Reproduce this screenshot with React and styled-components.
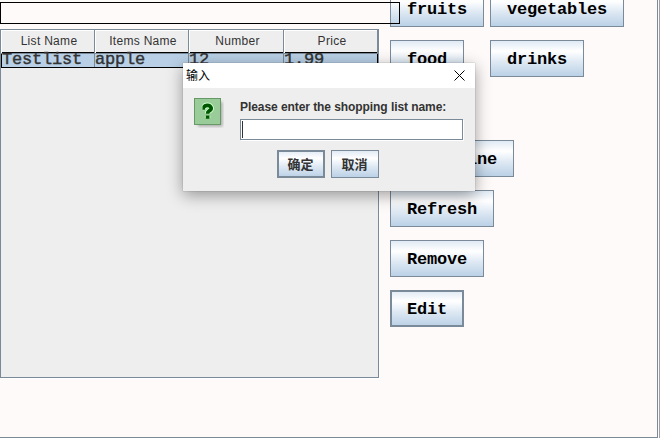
import React from "react";
import styled, { createGlobalStyle } from "styled-components";

const steel = "#7a8a99";
const ocean =
  "linear-gradient(to bottom, #dde8f3 0%, #ffffff 30%, #dde8f3 60%, #b8cfe5 100%)";

const GlobalStyle = createGlobalStyle`
  * { box-sizing: border-box; }
  body { margin: 0; overflow: hidden; background: #fffafa; }
`;

const Window = styled.main`
  position: relative;
  display: flex;
  width: 660px;
  height: 438px;
  overflow: hidden;
  border-right: 1px solid #a0a0a3;
  background: #fffafa;
`;

const Pane = styled.div`
  display: flex;
  width: 658px;
  flex: none;
  height: 438px;
  border-right: 1px solid ${steel};
  border-bottom: 1px solid ${steel};
`;

const ListSide = styled.section`
  width: 390px;
  flex: none;
  padding-top: 2px;
  position: relative;
  z-index: 1;
`;

const SearchField = styled.div`
  width: 400px;
  height: 22px;
  border: 1px solid #000;
`;

const ScrollPane = styled.div`
  width: 379px;
  height: 349px;
  margin-top: 5px;
  border: 1px solid ${steel};
  background: #eeeeee;
  box-shadow: 1px 1px 0 #fff;
`;

const HeaderRow = styled.div`
  display: grid;
  grid-template-columns: 94px 94px 95px 94px;
  height: 22px;
`;

const HeaderCell = styled.div`
  border-right: 1px solid ${steel};
  border-bottom: 1px solid ${steel};
  box-shadow: inset 1px 1px 0 #fff;
  font: 12px/23px "Liberation Sans", Arial, sans-serif;
  letter-spacing: 0.3px;
  padding-left: 3px;
  text-align: center;
  color: #333;
`;

const SelectedRow = styled.div`
  display: grid;
  grid-template-columns: 93px 94px 95px 93px;
  height: 16px;
  border: 1px solid #000;
  background: #b8cfe5;
`;

const Cell = styled.div`
  border-right: 1px solid ${steel};
  font: 17px/14px "Liberation Mono", "Courier New", monospace;
  letter-spacing: -0.2px;
  -webkit-text-stroke: 0.4px #333;
  color: #333;
  white-space: pre;
  &:last-child { border-right: 0; }
`;

const Actions = styled.section`
  display: flex;
  flex-direction: column;
  gap: 13px;
  margin-top: -10px;
`;

const ActionRow = styled.div`
  display: flex;
  gap: 6px;
  margin-top: ${(p) => (p.$apart ? "50px" : 0)};
`;

const ActionSlot = styled.div`
  min-width: 94px;
  display: flex;
`;

const ActionButton = styled.button`
  width: ${(p) => p.$chars * 10 + 34}px;
  height: 37px;
  padding: 2px 0 0 ${(p) => (p.$focused ? 15 : 16)}px;
  border: ${(p) => (p.$focused ? 2 : 1)}px solid ${steel};
  border-radius: 0;
  background: ${ocean} border-box;
  font: bold 17px/17px "Liberation Mono", "Courier New", monospace;
  letter-spacing: -0.2px;
  text-align: left;
  white-space: nowrap;
  color: #000;
`;

const Dialog = styled.div`
  position: absolute;
  left: 183px;
  top: 63px;
  z-index: 2;
  width: 292px;
  height: 128px;
  background: #eeeeee;
  box-shadow: 0 0 1px rgba(0, 0, 0, 0.35), 0 4px 15px rgba(0, 0, 0, 0.38);
`;

const TitleBar = styled.div`
  display: flex;
  justify-content: space-between;
  height: 25px;
  padding: 0 10px 0 3px;
  background: #fff;
  font: 12px/24px "Noto Sans CJK SC", sans-serif;
  color: #000;
  svg { margin-top: 7px; }
`;

const DialogBody = styled.div`
  display: flex;
  gap: 16px;
  padding: 10px 11px 0;
  height: 62px;
`;

const Prompt = styled.label`
  display: block;
  padding-top: 1px;
  font: bold 12px/16px "Liberation Sans", Arial, sans-serif;
  letter-spacing: -0.07px;
  white-space: nowrap;
  color: #333;
`;

const PromptField = styled.div`
  display: flex;
  width: 223px;
  height: 21px;
  margin-top: 4px;
  padding: 1px;
  border: 1px solid ${steel};
  background: #fff;
  box-shadow: 1px 1px 0 #fff;
`;

const Caret = styled.span`
  width: 1px;
  background: #333;
`;

const DialogButtons = styled.div`
  display: flex;
  justify-content: center;
  gap: 6px;
  padding-right: 2px;
`;

const DialogButton = styled.button`
  width: 48px;
  height: 28px;
  padding: 0 1px 0 0;
  border: ${(p) => (p.$primary ? 2 : 1)}px solid ${steel};
  border-radius: 0;
  background: ${ocean} border-box;
  font: bold 13px/22px "Noto Sans CJK SC", sans-serif;
  color: #333;
`;

const Question = () => (
  <svg width="30" height="30" viewBox="0 0 30 30">
    <defs>
      <filter id="soft" x="-20%" y="-20%" width="140%" height="140%">
        <feGaussianBlur stdDeviation="1.4" />
      </filter>
    </defs>
    <rect x="4" y="4" width="24.5" height="24.5" fill="#999" opacity="0.8" filter="url(#soft)" />
    <rect x="0.5" y="0.5" width="26" height="26" fill="#99cc99" stroke="#669966" />
    <g fill="none" strokeLinejoin="round">
      <path d="M9 9.6H10.2Q10.7 7.3 13.5 7.3T17.3 10.1Q17.3 12 15 13Q13.6 13.9 13.6 15.8M13.6 17.8V20.2" stroke="#ccffcc" strokeWidth="5.4" />
      <path d="M8.6 9.8H11.2M9.9 9.2Q10.7 7.4 13.5 7.4T17.2 10.1Q17.2 12 15 13Q13.6 13.9 13.6 15.8M13.6 17.6V20.8" stroke="#005500" strokeWidth="3.7" />
    </g>
  </svg>
);

const columns = ["List Name", "Items Name", "Number", "Price"];
const item = ["Testlist", "apple", "12", "1.99"];
const actionRows = [
  { labels: ["fruits", "vegetables"] },
  { labels: ["food", "drinks"] },
  { labels: ["margarine"], apart: true },
  { labels: ["Refresh"] },
  { labels: ["Remove"] },
  { labels: ["Edit"], focused: true },
];

export default function App() {
  return (
    <>
      <GlobalStyle />
      <Window>
        <Pane>
          <ListSide>
            <SearchField />
            <ScrollPane>
              <HeaderRow>
                {columns.map((c) => <HeaderCell key={c}>{c}</HeaderCell>)}
              </HeaderRow>
              <SelectedRow>
                {item.map((v) => <Cell key={v}>{v}</Cell>)}
              </SelectedRow>
            </ScrollPane>
          </ListSide>
          <Actions>
            {actionRows.map((row) => (
              <ActionRow key={row.labels[0]} $apart={row.apart}>
                {row.labels.map((label) => (
                  <ActionSlot key={label}>
                    <ActionButton $chars={label.length} $focused={row.focused}>
                      {label}
                    </ActionButton>
                  </ActionSlot>
                ))}
              </ActionRow>
            ))}
          </Actions>
        </Pane>
        <Dialog>
          <TitleBar>
            输入
            <svg width="11" height="11" viewBox="0 0 11 11">
              <path d="M0.5 0.5 10.5 10.5M10.5 0.5 0.5 10.5" stroke="#000" strokeWidth="1" />
            </svg>
          </TitleBar>
          <DialogBody>
            <Question />
            <div>
              <Prompt>Please enter the shopping list name:</Prompt>
              <PromptField><Caret /></PromptField>
            </div>
          </DialogBody>
          <DialogButtons>
            <DialogButton $primary>确定</DialogButton>
            <DialogButton>取消</DialogButton>
          </DialogButtons>
        </Dialog>
      </Window>
    </>
  );
}
